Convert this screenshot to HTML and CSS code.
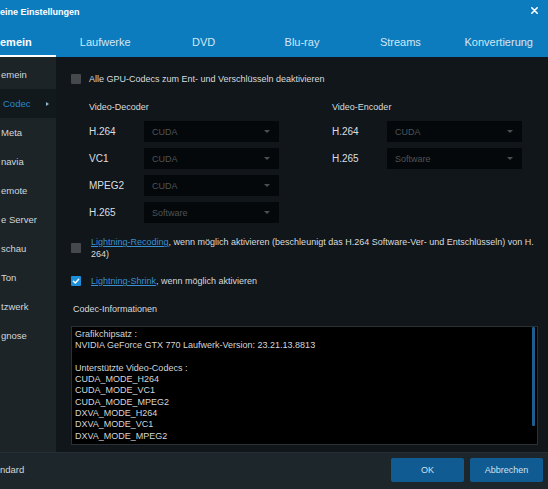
FILE: index.html
```html
<!DOCTYPE html>
<html lang="de">
<head>
<meta charset="utf-8">
<title>Allgemeine Einstellungen</title>
<link rel="stylesheet" href="styles.css">
</head>
<body>
<div class="window">
  <header class="titlebar">
    <div class="title-row">
      <span class="title">eine Einstellungen</span>
      <span class="close" aria-label="Schließen">
        <svg width="7" height="7" viewBox="0 0 7 7"><path d="M0.8 0.8 L6.2 6.2 M6.2 0.8 L0.8 6.2" stroke="#ffffff" stroke-width="1.6" stroke-linecap="round" fill="none"/></svg>
      </span>
    </div>
    <nav class="tabs">
      <span class="tab first active">emein</span>
      <span class="tab">Laufwerke</span>
      <span class="tab">DVD</span>
      <span class="tab">Blu-ray</span>
      <span class="tab">Streams</span>
      <span class="tab">Konvertierung</span>
    </nav>
  </header>

  <div class="main">
    <aside class="sidebar">
      <ul class="side-list">
        <li>emein</li>
        <li class="selected"><span>Codec</span><span class="side-arrow"></span></li>
        <li>Meta</li>
        <li>navia</li>
        <li>emote</li>
        <li>e Server</li>
        <li>schau</li>
        <li>Ton</li>
        <li>tzwerk</li>
        <li>gnose</li>
      </ul>
    </aside>

    <section class="content">
      <div class="check-row first-row">
        <span class="box"></span>
        <span class="check-text">Alle GPU-Codecs zum Ent- und Verschlüsseln deaktivieren</span>
      </div>

      <div class="codecs">
        <div class="codec-col dec">
          <h3 class="col-title">Video-Decoder</h3>
          <div class="fields">
            <div class="field"><span class="lbl">H.264</span><div class="select"><span>CUDA</span><span class="caret"></span></div></div>
            <div class="field"><span class="lbl">VC1</span><div class="select"><span>CUDA</span><span class="caret"></span></div></div>
            <div class="field"><span class="lbl">MPEG2</span><div class="select"><span>CUDA</span><span class="caret"></span></div></div>
            <div class="field"><span class="lbl">H.265</span><div class="select"><span>Software</span><span class="caret"></span></div></div>
          </div>
        </div>
        <div class="codec-col enc">
          <h3 class="col-title">Video-Encoder</h3>
          <div class="fields">
            <div class="field"><span class="lbl">H.264</span><div class="select"><span>CUDA</span><span class="caret"></span></div></div>
            <div class="field"><span class="lbl">H.265</span><div class="select"><span>Software</span><span class="caret"></span></div></div>
          </div>
        </div>
      </div>

      <div class="check-row lightning recode">
        <span class="box"></span>
        <span class="check-text"><a class="link">Lightning-Recoding</a>, wenn möglich aktivieren (beschleunigt das H.264 Software-Ver- und Entschlüsseln) von H.<br>264)</span>
      </div>

      <div class="check-row lightning shrink">
        <span class="box checked">
          <svg width="10" height="10" viewBox="0 0 10 10"><path d="M2.4 5.2 L4.3 7 L7.7 3.2" stroke="#ffffff" stroke-width="1.4" fill="none" stroke-linecap="round" stroke-linejoin="round"/></svg>
        </span>
        <span class="check-text"><a class="link">Lightning-Shrink</a>, wenn möglich aktivieren</span>
      </div>

      <h3 class="info-title">Codec-Informationen</h3>

      <div class="info-box">
        <div class="info-text">Grafikchipsatz :
NVIDIA GeForce GTX 770 Laufwerk-Version: 23.21.13.8813

Unterstützte Video-Codecs :
CUDA_MODE_H264
CUDA_MODE_VC1
CUDA_MODE_MPEG2
DXVA_MODE_H264
DXVA_MODE_VC1
DXVA_MODE_MPEG2</div>
        <div class="scroll"><div class="thumb"></div></div>
      </div>
    </section>
  </div>

  <footer class="footer">
    <span class="reset">ndard</span>
    <div class="buttons">
      <button class="btn">OK</button>
      <button class="btn">Abbrechen</button>
    </div>
  </footer>
</div>
</body>
</html>
```

FILE: styles.css
```css
html, body {
  margin: 0;
  padding: 0;
  background: #10161a;
}

.window {
  width: 548px;
  height: 489px;
  overflow: hidden;
  display: grid;
  grid-template-rows: 57px 395px 37px;
  font-family: "Liberation Sans", Arial, sans-serif;
  color: #d9dbdc;
}

/* ---------- Title bar ---------- */
.titlebar {
  background: #0c7cbf;
  display: flex;
  flex-direction: column;
}

.title-row {
  height: 24px;
  display: flex;
  align-items: center;
  justify-content: space-between;
  padding-right: 10px;
}

.title {
  font-size: 9px;
  font-weight: bold;
  color: #ffffff;
}

.close {
  display: flex;
  width: 7px;
  height: 7px;
  margin-top: -4px;
}

.tabs {
  height: 33px;
  display: flex;
}

.tab {
  flex: 0 0 98.4px;
  box-sizing: border-box;
  height: 33px;
  padding-top: 6px;
  line-height: 24px;
  font-size: 11px;
  color: #d3e7f5;
  text-align: center;
  white-space: nowrap;
}

.tab.first {
  flex: 0 0 56px;
  text-align: left;
}

.tab.active {
  color: #ffffff;
  font-weight: bold;
  border-bottom: 2px solid #ffffff;
}

/* ---------- Main ---------- */
.main {
  display: grid;
  grid-template-columns: 56px 1fr;
  min-height: 0;
}

.sidebar {
  background: #1c2428;
  padding-top: 3px;
}

.side-list {
  list-style: none;
  margin: 0;
  padding: 0;
}

.side-list li {
  height: 29px;
  line-height: 29px;
  font-size: 9.5px;
  color: #d2d6d8;
  white-space: nowrap;
  display: flex;
  align-items: center;
  padding-left: 1px;
}

.side-list li.selected {
  background: #12191d;
  color: #2c87c5;
  padding-left: 3px;
}

.side-arrow {
  margin-left: auto;
  margin-right: 7px;
  width: 0;
  height: 0;
  border-top: 2.5px solid transparent;
  border-bottom: 2.5px solid transparent;
  border-left: 3px solid #8fb5cf;
}

.content {
  background: #10161a;
  padding: 16px 9px 0 15px;
  display: flex;
  flex-direction: column;
  min-width: 0;
}

.check-row {
  display: flex;
  align-items: center;
  gap: 8px;
  font-size: 9px;
  line-height: 12px;
}

.box {
  flex: 0 0 10px;
  width: 10px;
  height: 10px;
  background: #45494c;
  border-radius: 1px;
  display: flex;
}

.box.checked {
  background: #1d8fd8;
}

.link {
  color: #3a8fd0;
  text-decoration: underline;
}

.codecs {
  display: flex;
  margin-top: 16px;
  padding-left: 18px;
}

.codec-col.dec {
  flex: 0 0 243px;
}

.col-title {
  margin: 0 0 8px;
  font-size: 9px;
  line-height: 12px;
  font-weight: normal;
  color: #d9dbdc;
}

.fields {
  display: flex;
  flex-direction: column;
  gap: 6px;
}

.field {
  display: flex;
  align-items: center;
  height: 21px;
}

.lbl {
  flex: 0 0 55px;
  font-size: 10px;
  color: #dcdfe0;
}

.select {
  width: 135px;
  height: 21px;
  box-sizing: border-box;
  background: #05080a;
  color: #4e5356;
  font-size: 9px;
  padding: 0 8px 0 8px;
  display: flex;
  align-items: center;
  justify-content: space-between;
}

.caret {
  width: 0;
  height: 0;
  border-left: 3px solid transparent;
  border-right: 3px solid transparent;
  border-top: 3px solid #4a4f52;
  margin-right: 1px;
}

.lightning {
  gap: 10px;
}

.recode {
  margin-top: 13px;
}

.shrink {
  margin-top: 15px;
}

.info-title {
  margin: 16px 0 0 2px;
  font-size: 9px;
  line-height: 12px;
  font-weight: normal;
  color: #d9dbdc;
}

.info-box {
  margin: 11px 1px 0 0;
  height: 119px;
  box-sizing: border-box;
  border: 1px solid #2a3135;
  background: #000000;
  display: flex;
}

.info-text {
  flex: 1;
  white-space: pre;
  font-size: 9px;
  line-height: 11.3px;
  color: #d4d6d7;
  padding: 2px 3px;
}

.scroll {
  flex: 0 0 3px;
  margin-right: 2px;
}

.thumb {
  height: 99px;
  background: #1b5f8f;
  border-radius: 1px;
}

/* ---------- Footer ---------- */
.footer {
  background: #1d262a;
  border-top: 1px solid #252f34;
  box-sizing: border-box;
  display: flex;
  align-items: flex-start;
  padding: 5px 5px 0 0;
}

.reset {
  font-size: 9.5px;
  line-height: 24px;
  color: #d4d7d9;
}

.buttons {
  margin-left: auto;
  display: flex;
  gap: 6px;
}

.btn {
  width: 73px;
  height: 24px;
  border: none;
  border-radius: 2px;
  background: #0f5b92;
  color: #cfe0ee;
  font-family: "Liberation Sans", Arial, sans-serif;
  font-size: 9px;
  padding: 0;
}
```
